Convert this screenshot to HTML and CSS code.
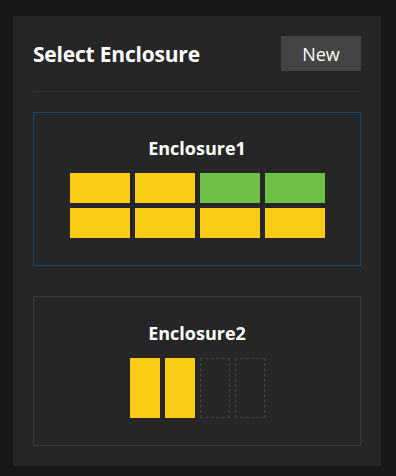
FILE: index.html
```html
<!DOCTYPE html>
<html>
<head>
    <title>Select Enclosure</title>
    <link rel="stylesheet" href="styles.css">
</head>
<body>
    <div class="panel">
        <div class="panel-header">
            <h2>Select Enclosure</h2>
            <button class="btn-new">New</button>
        </div>

        <div class="enclosure selected">
            <div class="enclosure-name">Enclosure1</div>
            <div class="bays bays-wide">
                <div class="bay used"></div>
                <div class="bay used"></div>
                <div class="bay free"></div>
                <div class="bay free"></div>
                <div class="bay used"></div>
                <div class="bay used"></div>
                <div class="bay used"></div>
                <div class="bay used"></div>
            </div>
        </div>

        <div class="enclosure">
            <div class="enclosure-name">Enclosure2</div>
            <div class="bays bays-tall">
                <div class="bay used"></div>
                <div class="bay used"></div>
                <div class="bay empty"></div>
                <div class="bay empty"></div>
            </div>
        </div>
    </div>
</body>
</html>
```

FILE: styles.css
```css
body {
    margin: 0;
    background: #181818;
    font-family: 'Open Sans', 'Noto Sans', sans-serif;
    color: #fff;
}

.panel {
    width: 328px;
    margin: 16px 0 0 13px;
    padding: 20px 20px 20px 20px;
    background: #262626;
}

.panel-header {
    display: flex;
    align-items: center;
    justify-content: space-between;
    padding-bottom: 20px;
    border-bottom: 1px solid #2f2f2f;
}

.panel-header h2 {
    margin: 0;
    font-size: 21px;
    font-weight: 700;
    letter-spacing: -0.2px;
}

.btn-new {
    width: 80px;
    height: 35px;
    background: #444;
    color: #fff;
    border: none;
    font-family: inherit;
    font-size: 18px;
    padding: 0;
}

.enclosure {
    margin-top: 20px;
    padding: 23px 0 27px;
    border: 1px solid #3c3c3c;
    display: flex;
    flex-direction: column;
    align-items: center;
    gap: 13px;
}

.enclosure + .enclosure {
    margin-top: 30px;
    padding-top: 24px;
}

.enclosure.selected {
    border-color: #0d4b6f;
}

.enclosure-name {
    font-size: 18px;
    font-weight: 700;
    line-height: 24px;
}

.bays {
    display: grid;
    gap: 5px;
}

.bays-wide {
    grid-template-columns: repeat(4, 60px);
    grid-auto-rows: 30px;
}

.bays-tall {
    grid-template-columns: repeat(4, 30px);
    grid-auto-rows: 60px;
}

.bay.used {
    background: #facc15;
}

.bay.free {
    background: #6fbf48;
}

.bay.empty {
    border: 1px dashed #464646;
}
```
